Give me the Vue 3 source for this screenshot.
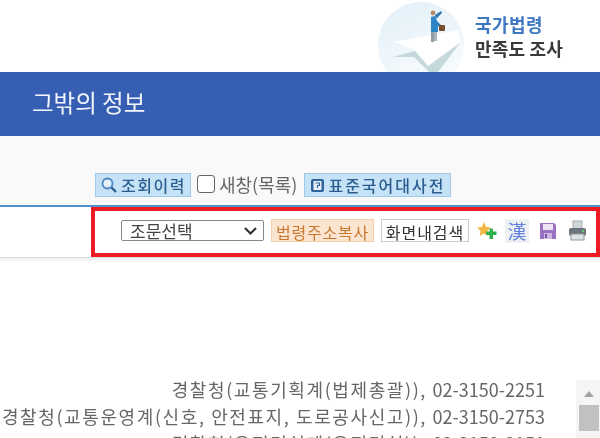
<script setup>
const lawLines = [
  { name: "경찰청(교통기획계(법제총괄)), ", tel: "02-3150-2251" },
  { name: "경찰청(교통운영계(신호, 안전표지, 도로공사신고)), ", tel: "02-3150-2753" },
  { name: "경찰청(운전면허계(운전면허)), ", tel: "02-3150-2151" },
];
</script>

<template>
  <div class="page">
    <header class="top">
      <div class="survey">
        <svg class="survey-logo" width="97" height="72" viewBox="0 0 97 72">
          <defs>
            <linearGradient id="sky" x1="0" y1="0" x2="0.4" y2="1">
              <stop offset="0" stop-color="#e2eff8" />
              <stop offset="1" stop-color="#f7fbfd" />
            </linearGradient>
          </defs>
          <circle cx="43" cy="45" r="43" fill="url(#sky)" />
          <path d="M15 42 L80 30 L82 42 L50 66 L37 50 Z" fill="#fff" />
          <path d="M15 57 L37 51 L50 66 L82 43 L60 72 L51 72 L36 57 Z" fill="#c5d9dc" />
          <rect x="53" y="31" width="3" height="11" fill="#8d9ea8" />
          <rect x="56" y="31" width="3" height="10" fill="#a9b6bd" />
          <path d="M53 17 L57 16 L60 24 L60 32 L53 32 Z" fill="#2d86c7" />
          <path d="M57 15 L63 11 L64 13 L58 19 Z" fill="#2d75ae" />
          <path d="M58 20 L65 27 L63 28 L57 24 Z" fill="#2d86c7" />
          <circle cx="55" cy="13" r="2.4" fill="#b58a6a" />
          <rect x="61" y="25" width="6" height="6" rx="1" fill="#7c4d2a" />
        </svg>
        <div class="survey-text">
          <span class="survey-blue">국가법령</span>
          <span class="survey-dark">만족도 조사</span>
        </div>
      </div>
    </header>

    <section class="band">
      <h1 class="band-title">그밖의 정보</h1>
    </section>

    <section class="actions">
      <button class="blue-btn history-btn">
        <svg width="18" height="18" viewBox="0 0 18 18">
          <circle cx="7.5" cy="7.5" r="5" fill="#e3eff9" stroke="#4b86bf" stroke-width="1.8" />
          <path d="M11.5 11.5 L16 16" stroke="#2d5f94" stroke-width="2.4" />
        </svg>
        조회이력
      </button>
      <label class="new-window">
        <span class="fake-check"></span>
        새창(목록)
      </label>
      <button class="blue-btn dict-btn">
        <svg width="15" height="15" viewBox="0 0 15 15">
          <rect x="1" y="1" width="13" height="13" rx="2" fill="#2f639b" />
          <rect x="3.5" y="3" width="8" height="9" fill="#e8f1f9" />
          <path d="M5.5 5 H9.5 V7.5 H7.5 V10" fill="none" stroke="#2f639b" stroke-width="1.2" />
        </svg>
        표준국어대사전
      </button>
    </section>

    <section class="toolbar">
      <div class="fake-select">
        <span>조문선택</span>
        <svg width="15" height="10" viewBox="0 0 15 10">
          <path d="M2 2 L7.5 7.5 L13 2" fill="none" stroke="#333" stroke-width="2.2" />
        </svg>
      </div>
      <button class="copy-btn">법령주소복사</button>
      <button class="find-btn">화면내검색</button>
      <svg class="star-icon" width="20" height="18" viewBox="0 0 20 18">
        <path d="M7 0 L9.2 5 L14 5.6 L10.4 9 L11.4 14 L7 11.5 L2.6 14 L3.6 9 L0 5.6 L4.8 5 Z" fill="#f4b642" />
        <path d="M12.5 6.5 H16 V9.5 H19.5 V13 H16 V17 H12.5 V13 H9 V9.5 H12.5 Z" fill="#2fb150" />
      </svg>
      <span class="hanja">漢</span>
      <svg class="save-icon" width="18" height="18" viewBox="0 0 18 18">
        <path d="M1 1 H15 L17 3 V17 H1 Z" fill="#9a72c4" />
        <rect x="4" y="2" width="10" height="6" fill="#ece3f5" />
        <rect x="5" y="11" width="8" height="6" fill="#cdb9e2" />
        <rect x="6" y="12" width="2" height="4" fill="#7f58ad" />
      </svg>
      <svg class="print-icon" width="19" height="21" viewBox="0 0 19 21">
        <rect x="5" y="1" width="9" height="8" fill="#cfd5d8" stroke="#a5adb2" />
        <rect x="1" y="8" width="17" height="8" rx="2" fill="#6a747a" />
        <rect x="3" y="14" width="13" height="6" fill="#dfe3e5" stroke="#8f999e" />
        <rect x="14" y="10" width="2" height="2" fill="#5acb79" />
      </svg>
    </section>

    <div class="mark"></div>

    <section class="body">
      <div class="lines">
        <p v-for="line in lawLines" :key="line.tel">
          <span class="law-name">{{ line.name }}</span>{{ line.tel }}
        </p>
      </div>
      <div class="scrollbar">
        <div class="scroll-arrow"></div>
        <div class="scroll-thumb"></div>
      </div>
    </section>
  </div>
</template>

<style scoped>
.page {
  position: relative;
  width: 600px;
  height: 438px;
  overflow: hidden;
  background: #fff;
  font-family: "Noto Sans CJK KR", "Liberation Sans", sans-serif;
  filter: blur(0.35px);
}

.top {
  height: 72px;
  display: flex;
  justify-content: flex-end;
  overflow: hidden;
}

.survey {
  display: flex;
  align-items: flex-start;
  margin-right: 34px;
}

.survey-text {
  display: flex;
  flex-direction: column;
  width: 91px;
  padding-top: 12px;
  font-weight: 700;
  font-size: 18px;
  line-height: 24px;
  white-space: nowrap;
}

.survey-blue {
  color: #3f78c2;
  letter-spacing: 0.4px;
}

.survey-dark {
  color: #3a3a3a;
  letter-spacing: 0.2px;
}

.band {
  height: 64px;
  box-sizing: border-box;
  background: #365fb3;
  display: flex;
  align-items: center;
  padding: 0 0 5px 32px;
}

.band-title {
  margin: 0;
  color: #f2f5fb;
  font-size: 23.5px;
  font-weight: 400;
}

.actions {
  height: 71px;
  box-sizing: border-box;
  background: #f9f9f9;
  border-bottom: 2px solid #4a93cf;
  display: flex;
  align-items: flex-start;
  padding: 37px 0 0 95px;
}

.blue-btn {
  height: 24px;
  padding: 0;
  box-sizing: border-box;
  display: flex;
  align-items: center;
  border: 1px solid #9cc9ec;
  background: #c6e2f7;
  color: #2a5e8e;
  font: 500 16px "Noto Sans CJK KR", sans-serif;
  white-space: nowrap;
}

.history-btn {
  width: 96px;
  padding-left: 4px;
  gap: 3px;
  letter-spacing: 1.5px;
}

.dict-btn {
  width: 147px;
  margin-left: 7px;
  padding-left: 5px;
  gap: 3px;
  letter-spacing: 2px;
}

.new-window {
  display: flex;
  align-items: center;
  gap: 4px;
  height: 22px;
  margin-left: 6px;
  color: #666;
  font-size: 18px;
  white-space: nowrap;
}

.fake-check {
  width: 18px;
  height: 18px;
  box-sizing: border-box;
  border: 1px solid #666;
  border-radius: 3px;
  background: #fff;
}

.toolbar {
  height: 51px;
  box-sizing: border-box;
  background: #fff;
  border-bottom: 1px solid #ddd;
  box-shadow: 0 2px 3px rgba(0, 0, 0, 0.08);
  display: flex;
  align-items: center;
  padding: 0 0 3px 121px;
}

.fake-select {
  width: 143px;
  height: 21px;
  box-sizing: border-box;
  border: 1px solid #888;
  border-radius: 2px;
  background: #fff;
  display: flex;
  align-items: center;
  justify-content: space-between;
  padding: 0 5px 0 8px;
  color: #444;
  font-size: 17px;
}

.copy-btn {
  margin-left: 7px;
  width: 103px;
  height: 23px;
  padding: 0;
  border: 1px solid #f5cfa9;
  background: #fbe5d0;
  color: #c9772f;
  font: 400 16px "Noto Sans CJK KR", sans-serif;
  letter-spacing: 0.8px;
  white-space: nowrap;
}

.find-btn {
  margin-left: 7px;
  width: 88px;
  height: 23px;
  padding: 0;
  border: 1px solid #ccc;
  background: #fff;
  color: #333;
  font: 400 16px "Noto Sans CJK KR", sans-serif;
  letter-spacing: 1px;
  white-space: nowrap;
}

.star-icon {
  flex: none;
  margin-left: 8px;
}

.hanja {
  margin-left: 8px;
  width: 24px;
  height: 24px;
  background: #eef0f3;
  color: #5f82dc;
  font-size: 19px;
  line-height: 24px;
  text-align: center;
}

.save-icon {
  flex: none;
  margin-left: 10px;
}

.print-icon {
  flex: none;
  margin-left: 11px;
}

.mark {
  position: absolute;
  left: 91px;
  top: 207px;
  width: 509px;
  height: 50px;
  box-sizing: border-box;
  border: 4.5px solid #ed1c24;
  pointer-events: none;
}

.body {
  display: flex;
  justify-content: flex-end;
  padding-top: 118px;
}

.lines {
  width: 545px;
  flex: none;
  color: #666;
  font-size: 18px;
  line-height: 27px;
  white-space: nowrap;
}

.lines p {
  margin: 0;
  text-align: right;
}

.law-name {
  letter-spacing: 1.6px;
}

.scrollbar {
  width: 24px;
  height: 58px;
  flex: none;
  box-sizing: border-box;
  margin: 4px 0 0 31px;
  padding: 11px 1px 0 3px;
  background: #f5f5f5;
}

.scroll-arrow {
  width: 0;
  height: 0;
  margin: 0 auto 8px;
  border-left: 5px solid transparent;
  border-right: 5px solid transparent;
  border-bottom: 6px solid #a3a3a3;
}

.scroll-thumb {
  height: 26px;
  background: #c1c1c1;
}
</style>

<style>
html,
body {
  margin: 0;
  background: #fff;
}
</style>
